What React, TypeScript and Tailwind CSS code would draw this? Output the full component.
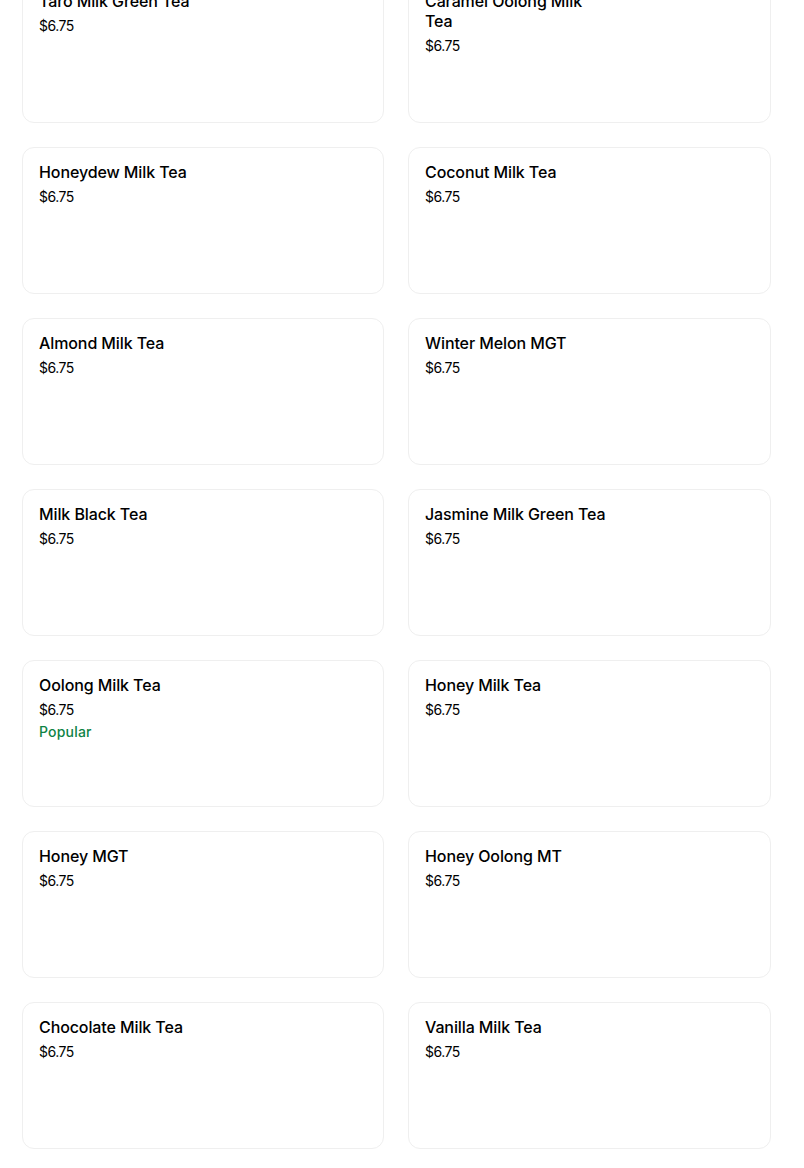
const items: { name: string; price: string; popular?: boolean }[] = [
  { name: "Taro Milk Green Tea", price: "$6.75" },
  { name: "Caramel Oolong Milk Tea", price: "$6.75" },
  { name: "Honeydew Milk Tea", price: "$6.75" },
  { name: "Coconut Milk Tea", price: "$6.75" },
  { name: "Almond Milk Tea", price: "$6.75" },
  { name: "Winter Melon MGT", price: "$6.75" },
  { name: "Milk Black Tea", price: "$6.75" },
  { name: "Jasmine Milk Green Tea", price: "$6.75" },
  { name: "Oolong Milk Tea", price: "$6.75", popular: true },
  { name: "Honey Milk Tea", price: "$6.75" },
  { name: "Honey MGT", price: "$6.75" },
  { name: "Honey Oolong MT", price: "$6.75" },
  { name: "Chocolate Milk Tea", price: "$6.75" },
  { name: "Vanilla Milk Tea", price: "$6.75" },
];

function MenuCard({ name, price, popular }: { name: string; price: string; popular?: boolean }) {
  return (
    <div className="h-[147px] rounded-xl border border-[#efefef] bg-white px-4 pt-[14px]">
      <div className="max-w-[186px] text-[16px] leading-5 font-medium tracking-[-0.1px] text-black">{name}</div>
      <div className="mt-[5px] text-[14px] leading-5 tracking-[-0.5px] text-black">{price}</div>
      {popular && (
        <div className="mt-[2px] text-[14px] leading-5 font-medium tracking-[0.2px] text-[#0e8345]">Popular</div>
      )}
    </div>
  );
}

export default function App() {
  return (
    <div className="h-[1168px] overflow-hidden bg-white" style={{ fontFamily: "Inter, 'Liberation Sans', sans-serif" }}>
      <div className="ml-[22px] mt-[-24px] grid grid-cols-[362px_363px] gap-6">
        {items.map((item) => (
          <MenuCard key={item.name} {...item} />
        ))}
      </div>
    </div>
  );
}
